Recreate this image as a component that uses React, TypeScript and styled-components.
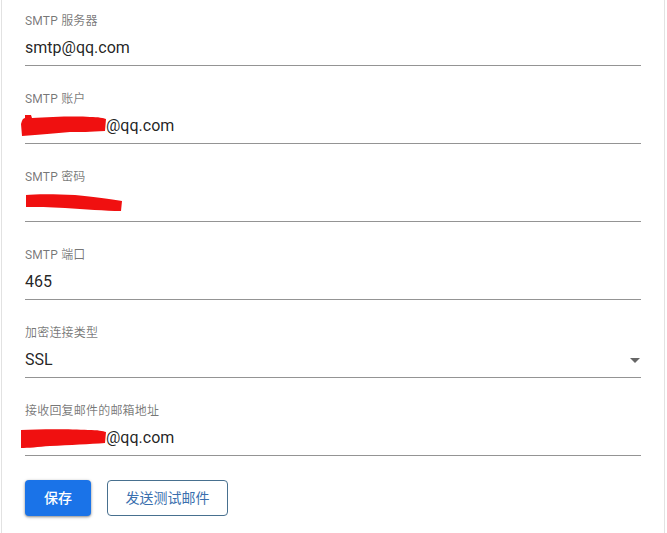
import * as React from 'react';
import styled, { createGlobalStyle } from 'styled-components';

const GlobalStyle = createGlobalStyle`
  html, body {
    margin: 0;
    padding: 0;
    background: #ffffff;
  }
  body {
    font-family: Roboto, "Noto Sans CJK SC", "Noto Sans", sans-serif;
    -webkit-font-smoothing: antialiased;
  }
`;

const COLORS = {
  label: 'rgba(0, 0, 0, 0.54)',
  text: 'rgba(0, 0, 0, 0.87)',
  line: 'rgba(0, 0, 0, 0.42)',
  blue: '#1a73e8',
  red: '#f01010',
};

const Card = styled.div`
  margin-left: 1px;
  width: 664px;
  min-height: 533px;
  box-sizing: border-box;
  border-left: 1px solid #e2e2e2;
  border-right: 1px solid #e2e2e2;
  padding: 13px 23px 0 23px;
`;

const Field = styled.div`
  display: flex;
  flex-direction: column;
  margin-bottom: 25px;
`;

const Label = styled.div`
  font-size: 12px;
  line-height: 16px;
  color: ${COLORS.label};
  letter-spacing: 0.2px;
`;

const ValueRow = styled.div`
  margin-top: 9px;
  padding-bottom: 7px;
  border-bottom: 1px solid ${COLORS.line};
  display: flex;
  align-items: center;
  height: 20px;
`;

const Value = styled.span`
  font-size: 16px;
  line-height: 20px;
  color: ${COLORS.text};
  flex: 1;
`;

const Caret = styled.span`
  width: 0;
  height: 0;
  margin-right: 1px;
  border-left: 5px solid transparent;
  border-right: 5px solid transparent;
  border-top: 5px solid #666666;
`;

const Scribble = styled.svg<{ $shift: number }>`
  display: block;
  flex: none;
  margin-left: ${(p) => p.$shift}px;
`;

const Actions = styled.div`
  display: flex;
  gap: 16px;
  margin-top: -1px;
`;

const Button = styled.button<{ $primary?: boolean }>`
  height: 36px;
  box-sizing: border-box;
  padding: 0 16px 3px;
  border-radius: 4px;
  font-family: Roboto, "Noto Sans CJK SC", sans-serif;
  font-size: 14px;
  font-weight: ${(p) => (p.$primary ? 500 : 400)};
  cursor: pointer;
  background: ${(p) => (p.$primary ? COLORS.blue : '#ffffff')};
  color: ${(p) => (p.$primary ? '#ffffff' : '#3a6fae')};
  border: ${(p) => (p.$primary ? 'none' : '1px solid #48708f')};
  box-shadow: ${(p) =>
    p.$primary
      ? '0 1px 2px rgba(0,0,0,0.3), 0 1px 3px 1px rgba(0,0,0,0.15)'
      : 'none'};
`;

const SaveButton = styled(Button)`
  width: 66px;
`;

const TestButton = styled(Button)`
  width: 121px;
`;

// red marker strokes that hide the private parts of the values
const SCRIBBLES = {
  a: {
    w: 86,
    shift: -5,
    d: 'M5 0 L 11 0 L 12 3 C 30 2, 55 1, 70 2 C 78 2, 84 3, 86 4 L 85 16 C 70 17, 60 17, 50 17 C 35 18, 20 20, 2 21 L 1 9 C 2 5, 3 3, 5 3 Z',
  },
  b: {
    w: 98,
    shift: 0,
    d: 'M1 2 C 10 1, 30 1, 50 2 C 70 4, 85 6, 97 8 L 96 18 C 80 18, 60 16, 40 15 C 25 14, 10 14, 1 14 Z',
  },
  c: {
    w: 86,
    shift: -5,
    d: 'M1 3 C 20 2, 50 2, 68 3 C 78 3, 83 4, 86 5 L 85 16 C 70 17, 50 18, 30 19 C 18 20, 8 21, 1 21 Z',
  },
};

function Redact({ kind }: { kind: 'a' | 'b' | 'c' }) {
  const s = SCRIBBLES[kind];
  return (
    <Scribble $shift={s.shift} width={s.w} height="22" viewBox={`0 0 ${s.w} 22`}>
      <path d={s.d} fill={COLORS.red} />
    </Scribble>
  );
}

const App: React.FunctionComponent = () => {
  return (
    <>
      <GlobalStyle />
      <Card>
        <Field>
          <Label>{'SMTP 服务器'}</Label>
          <ValueRow>
            <Value>{'smtp@qq.com'}</Value>
          </ValueRow>
        </Field>

        <Field>
          <Label>{'SMTP 账户'}</Label>
          <ValueRow>
            <Redact kind="a" />
            <Value>{'@qq.com'}</Value>
          </ValueRow>
        </Field>

        <Field>
          <Label>{'SMTP 密码'}</Label>
          <ValueRow>
            <Redact kind="b" />
          </ValueRow>
        </Field>

        <Field>
          <Label>{'SMTP 端口'}</Label>
          <ValueRow>
            <Value>{'465'}</Value>
          </ValueRow>
        </Field>

        <Field>
          <Label>{'加密连接类型'}</Label>
          <ValueRow>
            <Value>{'SSL'}</Value>
            <Caret />
          </ValueRow>
        </Field>

        <Field>
          <Label>{'接收回复邮件的邮箱地址'}</Label>
          <ValueRow>
            <Redact kind="c" />
            <Value>{'@qq.com'}</Value>
          </ValueRow>
        </Field>

        <Actions>
          <SaveButton $primary>{'保存'}</SaveButton>
          <TestButton>{'发送测试邮件'}</TestButton>
        </Actions>
      </Card>
    </>
  );
};

export default App;
